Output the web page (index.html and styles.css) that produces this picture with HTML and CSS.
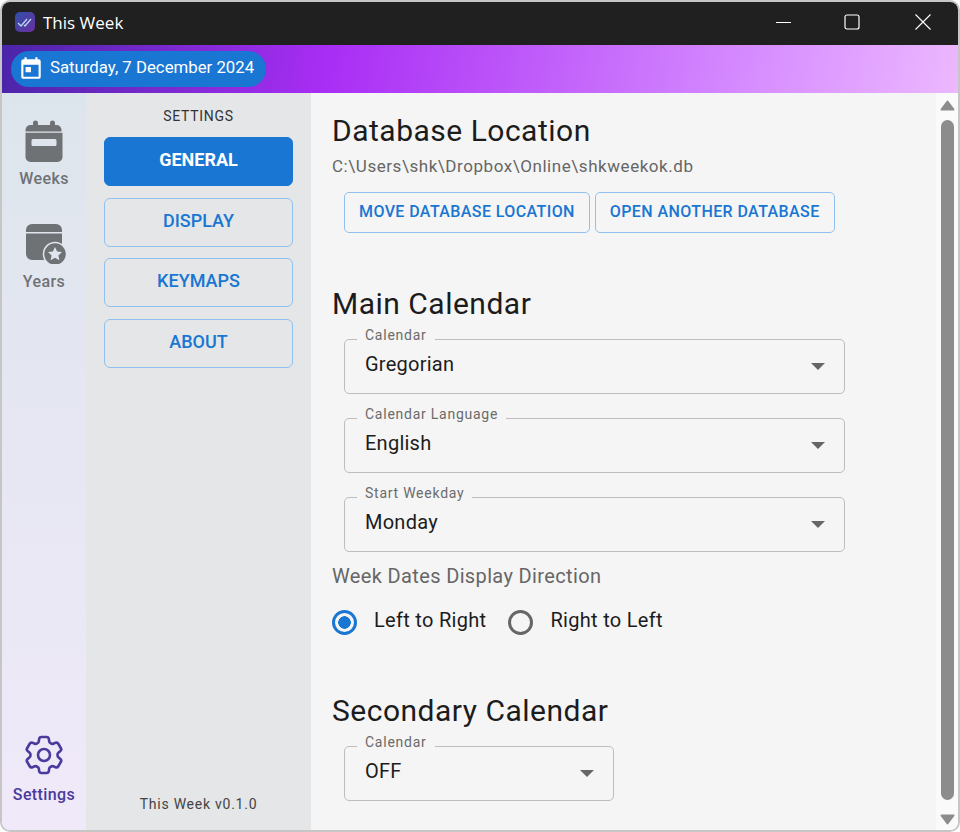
FILE: index.html
```html
<!DOCTYPE html>
<html lang="en">
<head>
    <meta charset="UTF-8">
    <title>This Week</title>
    <link rel="stylesheet" href="styles.css">
</head>
<body>
    <div class="window">
        <div class="titlebar">
            <svg class="app-icon" width="20" height="20" viewBox="0 0 20 20">
                <defs>
                    <linearGradient id="appGrad" x1="0" y1="0" x2="1" y2="1">
                        <stop offset="0" stop-color="#2f4fa8"/>
                        <stop offset="1" stop-color="#6a2f9e"/>
                    </linearGradient>
                </defs>
                <rect width="20" height="20" rx="5" fill="url(#appGrad)"/>
                <path d="M3 11l3 3 6-7M9 13l1 1 6-7" fill="none" stroke="#b9d8f2" stroke-width="1.3"/>
            </svg>
            <span class="app-title">This Week</span>
            <div class="win-controls">
                <svg class="win-min" width="16" height="16" viewBox="0 0 16 16"><path d="M0 8.5h15" stroke="#fff" fill="none"/></svg>
                <svg width="16" height="16" viewBox="0 0 16 16"><rect x="1" y="1" width="14" height="14" rx="2" stroke="#fff" stroke-width="1.2" fill="none"/></svg>
                <svg width="16" height="16" viewBox="0 0 16 16"><path d="M.5.5l15 15M15.500.5l-15 15" stroke="#fff" stroke-width="1.1" fill="none"/></svg>
            </div>
        </div>

        <div class="datebar">
            <div class="date-pill">
                <svg width="26" height="26" viewBox="0 0 24 24"><path fill="#fff" d="M19 4h-1V2h-2v2H8V2H6v2H5a2 2 0 0 0-2 2v14a2 2 0 0 0 2 2h14a2 2 0 0 0 2-2V6a2 2 0 0 0-2-2zm0 16H5V9h14v11zM7 11h5v5H7z"/></svg>
                <span>Saturday, 7 December 2024</span>
            </div>
        </div>

        <div class="main">
            <nav class="sidebar">
                <div class="side-item">
                    <svg width="48" height="48" viewBox="0 0 48 48">
                        <path fill="#6f7275" d="M13 10a2.500 2.500 0 0 1 5 0v2h12v-2a2.500 2.500 0 0 1 5 0v2h1.500a5 5 0 0 1 5 5v1.500H5.500V17a5 5 0 0 1 5-5H13zM5.500 19.700h37V44a5 5 0 0 1-5 5h-27a5 5 0 0 1-5-5zM13 26a1.500 1.500 0 0 0-1.500 1.500v4A1.500 1.500 0 0 0 13 33h22a1.500 1.500 0 0 0 1.500-1.500v-4A1.500 1.500 0 0 0 35 26z" fill-rule="evenodd" transform="translate(0 -3)"/>
                    </svg>
                    <span>Weeks</span>
                </div>
                <div class="side-item side-years">
                    <svg width="48" height="48" viewBox="0 0 48 48">
                        <path fill="#6f7275" d="M6 14a6 6 0 0 1 6-6h24a6 6 0 0 1 6 6v2H6zM6 17.500h36V38a6 6 0 0 1-6 6H12a6 6 0 0 1-6-6z"/>
                        <circle cx="35" cy="38" r="11.500" fill="#6f7275" stroke="#e0e6ed" stroke-width="1.500"/>
                        <path fill="#e0e6ed" d="M35 31l2.100 4.500 4.900.6-3.600 3.300 1 4.900-4.400-2.500-4.400 2.500 1-4.900-3.600-3.300 4.900-.6z"/>
                    </svg>
                    <span>Years</span>
                </div>
                <div class="side-item side-active">
                    <svg width="48" height="48" viewBox="0 0 24 24" fill="none" stroke="#4a3a9c" stroke-width="1.300">
                        <path stroke-linejoin="round" d="M9.594 3.940c.09-.542.56-.94 1.110-.94h2.593c.55 0 1.020.398 1.110.94l.213 1.281c.063.374.313.686.645.870.074.040.147.083.22.127.325.196.72.257 1.075.124l1.217-.456a1.125 1.125 0 0 1 1.370.490l1.296 2.247a1.125 1.125 0 0 1-.26 1.431l-1.003.827c-.293.241-.438.613-.43.992a7.723 7.723 0 0 1 0 .255c-.008.378.137.75.43.991l1.004.827c.424.35.534.955.26 1.430l-1.298 2.247a1.125 1.125 0 0 1-1.369.491l-1.217-.456c-.355-.133-.75-.072-1.076.124a6.470 6.470 0 0 1-.22.128c-.331.183-.581.495-.644.869l-.213 1.281c-.09.543-.56.94-1.110.94h-2.594c-.55 0-1.019-.398-1.110-.94l-.213-1.281c-.062-.374-.312-.686-.644-.870a6.520 6.520 0 0 1-.22-.127c-.325-.196-.72-.257-1.076-.124l-1.217.456a1.125 1.125 0 0 1-1.369-.490l-1.297-2.247a1.125 1.125 0 0 1 .26-1.431l1.004-.827c.292-.24.437-.613.43-.991a6.932 6.932 0 0 1 0-.255c.007-.38-.138-.751-.43-.992l-1.004-.827a1.125 1.125 0 0 1-.26-1.430l1.297-2.247a1.125 1.125 0 0 1 1.370-.491l1.216.456c.356.133.751.072 1.076-.124.072-.044.146-.086.22-.128.332-.183.582-.495.644-.869l.214-1.280Z"/>
                        <path d="M15 12a3 3 0 1 1-6 0 3 3 0 0 1 6 0Z"/>
                    </svg>
                    <span>Settings</span>
                </div>
            </nav>

            <aside class="panel">
                <div class="panel-title">SETTINGS</div>
                <button class="nav-btn nav-active">GENERAL</button>
                <button class="nav-btn">DISPLAY</button>
                <button class="nav-btn">KEYMAPS</button>
                <button class="nav-btn">ABOUT</button>
                <div class="version">This Week v0.1.0</div>
            </aside>

            <main class="content">
                <h2>Database Location</h2>
                <p class="db-path">C:\Users\shk\Dropbox\Online\shkweekok.db</p>
                <div class="db-actions">
                    <button class="db-btn">MOVE DATABASE LOCATION</button>
                    <button class="db-btn">OPEN ANOTHER DATABASE</button>
                </div>

                <h2 class="sec-main">Main Calendar</h2>
                <div class="field">
                    <label>Calendar</label>
                    <span>Gregorian</span>
                    <i class="caret"></i>
                </div>
                <div class="field">
                    <label>Calendar Language</label>
                    <span>English</span>
                    <i class="caret"></i>
                </div>
                <div class="field">
                    <label>Start Weekday</label>
                    <span>Monday</span>
                    <i class="caret"></i>
                </div>

                <div class="radio-title">Week Dates Display Direction</div>
                <div class="radios">
                    <div class="radio radio-on"><i></i><span>Left to Right</span></div>
                    <div class="radio"><i></i><span>Right to Left</span></div>
                </div>

                <h2 class="sec-second">Secondary Calendar</h2>
                <div class="field field-small">
                    <label>Calendar</label>
                    <span>OFF</span>
                    <i class="caret"></i>
                </div>
            </main>

            <div class="scrollbar">
                <svg width="15" height="11" viewBox="0 0 15 11"><path d="M7.500 1.500L13.500 9.500H1.500z" fill="#8c8c8c" stroke="#8c8c8c" stroke-width="2" stroke-linejoin="round"/></svg>
                <div class="thumb"></div>
                <svg width="15" height="11" viewBox="0 0 15 11"><path d="M1.500 1.500H13.500L7.500 9.500z" fill="#8c8c8c" stroke="#8c8c8c" stroke-width="2" stroke-linejoin="round"/></svg>
            </div>
        </div>
    </div>
</body>
</html>
```

FILE: styles.css
```css
* {
    box-sizing: border-box;
}
body {
    margin: 0;
    background: #fff;
    font-family: Roboto, sans-serif;
}
.window {
    width: 960px;
    height: 832px;
    border: 2px solid #c6c6c6;
    border-radius: 10px;
    overflow: hidden;
    display: flex;
    flex-direction: column;
}
.titlebar {
    height: 43px;
    flex: none;
    background: #202020;
    color: #fff;
    display: flex;
    align-items: center;
    padding: 0 0 3px 13px;
}
.app-title {
    margin-left: 8px;
    font-family: "Open Sans", sans-serif;
    font-size: 17px;
}
.win-controls {
    margin-left: auto;
    margin-right: 27px;
    display: flex;
    gap: 55px;
}
.win-min {
    margin-right: -3px;
}
.datebar {
    height: 48px;
    flex: none;
    background: linear-gradient(100deg, #4a25a8 0%, #a92df5 34%, #d68cff 78%, #ecb8ff 100%);
    padding: 6px 9px;
}
.date-pill {
    width: 255px;
    height: 36px;
    border-radius: 18px;
    background: #1976d2;
    color: #fff;
    font-size: 16.800px;
    display: flex;
    align-items: center;
    gap: 6px;
    padding-left: 7px;
}
.date-pill svg {
    margin-bottom: 2px;
}
.date-pill span {
    padding-bottom: 5px;
}
.main {
    flex: 1;
    display: flex;
    min-height: 0;
}
.sidebar {
    width: 84px;
    flex: none;
    background: linear-gradient(180deg, #dde5ec 0%, #f0e9f9 100%);
    display: flex;
    flex-direction: column;
    align-items: center;
    padding-top: 23px;
}
.side-item {
    display: flex;
    flex-direction: column;
    align-items: center;
    color: #6f7275;
    font-size: 16px;
    font-weight: 500;
    letter-spacing: 0.4px;
}
.side-item span {
    margin-top: 5px;
}
.side-years {
    margin-top: 28px;
}
.side-years span {
    margin-top: 8px;
}
.side-active {
    margin-top: auto;
    margin-bottom: 26px;
    color: #4a3a9c;
}
.side-active span {
    margin-top: 6px;
}
.panel {
    width: 225px;
    flex: none;
    background: #e4e6e8;
    display: flex;
    flex-direction: column;
    align-items: center;
    padding-top: 15px;
}
.panel-title {
    font-size: 14px;
    letter-spacing: 0.7px;
    color: #333;
    height: 16px;
    margin-bottom: 13px;
}
.nav-btn {
    width: 189px;
    height: 49px;
    flex: none;
    margin-bottom: 11.700px;
    padding: 0 0 4px;
    border: 1px solid #90c0ee;
    border-radius: 6px;
    background: transparent;
    color: #1976d2;
    font-family: Roboto, sans-serif;
    font-size: 18px;
    font-weight: 500;
}
.nav-active {
    background: #1976d2;
    border-color: #1976d2;
    color: #fff;
    font-weight: 700;
}
.version {
    margin-top: auto;
    margin-bottom: 18px;
    font-size: 14px;
    letter-spacing: 0.75px;
    color: #444;
}
.content {
    flex: 1;
    background: #f5f5f5;
    padding: 20px 0 0 21px;
    overflow: hidden;
    color: #1c1c1c;
}
h2 {
    margin: 0;
    font-size: 30px;
    font-weight: 400;
    line-height: 36px;
    letter-spacing: 0.5px;
}
.db-path {
    margin: 7px 0 0;
    font-size: 17px;
    line-height: 20px;
    letter-spacing: 0.55px;
    color: #666;
}
.db-actions {
    display: flex;
    gap: 5px;
    margin: 16px 0 0 12px;
}
.db-btn {
    height: 41px;
    padding: 0 14px 2px;
    border: 1px solid #90c0ee;
    border-radius: 5px;
    background: transparent;
    color: #1976d2;
    font-family: Roboto, sans-serif;
    font-size: 16px;
    font-weight: 500;
    letter-spacing: 0.4px;
}
.sec-main {
    margin-top: 53px;
}
.field {
    position: relative;
    width: 501px;
    height: 55px;
    margin: 24px 0 0 12px;
    border: 1px solid #bdbdbd;
    border-radius: 5px;
    padding: 0 20px 6px;
    display: flex;
    align-items: center;
    font-size: 20px;
    letter-spacing: 0.25px;
}
.sec-main + .field {
    margin-top: 17px;
}
.field label {
    position: absolute;
    left: 12px;
    top: -13px;
    padding: 0 8px;
    background: #f5f5f5;
    font-size: 14px;
    line-height: 16px;
    letter-spacing: 0.75px;
    color: #6b6b6b;
}
.field-small {
    width: 270px;
}
.caret {
    position: absolute;
    right: 19px;
    top: 23px;
    border-left: 7px solid transparent;
    border-right: 7px solid transparent;
    border-top: 7px solid #666;
}
.radio-title {
    margin-top: 12px;
    font-size: 20px;
    line-height: 24px;
    letter-spacing: 0.36px;
    color: #666;
}
.radios {
    display: flex;
    gap: 22px;
    margin-top: 20px;
    font-size: 20px;
    letter-spacing: 0.3px;
}
.radio {
    display: flex;
    align-items: center;
    gap: 17px;
}
.radio span {
    padding-bottom: 4px;
}
.radio i {
    width: 25px;
    height: 25px;
    border: 3px solid #666;
    border-radius: 50%;
    background: transparent;
}
.radio-on i {
    border-color: #1976d2;
    background: radial-gradient(circle, #1976d2 0, #1976d2 6px, transparent 6.500px);
}
.sec-second {
    margin-top: 57px;
}
.sec-second + .field {
    margin-top: 17px;
}
.scrollbar {
    width: 22px;
    flex: none;
    background: #fafafa;
    display: flex;
    flex-direction: column;
    align-items: center;
    padding: 7px 0 5px 1px;
}
.scrollbar svg {
    flex: none;
}
.thumb {
    flex: 1;
    width: 13px;
    margin: 9px 0 14px;
    border-radius: 7px;
    background: #8c8c8c;
}
```
